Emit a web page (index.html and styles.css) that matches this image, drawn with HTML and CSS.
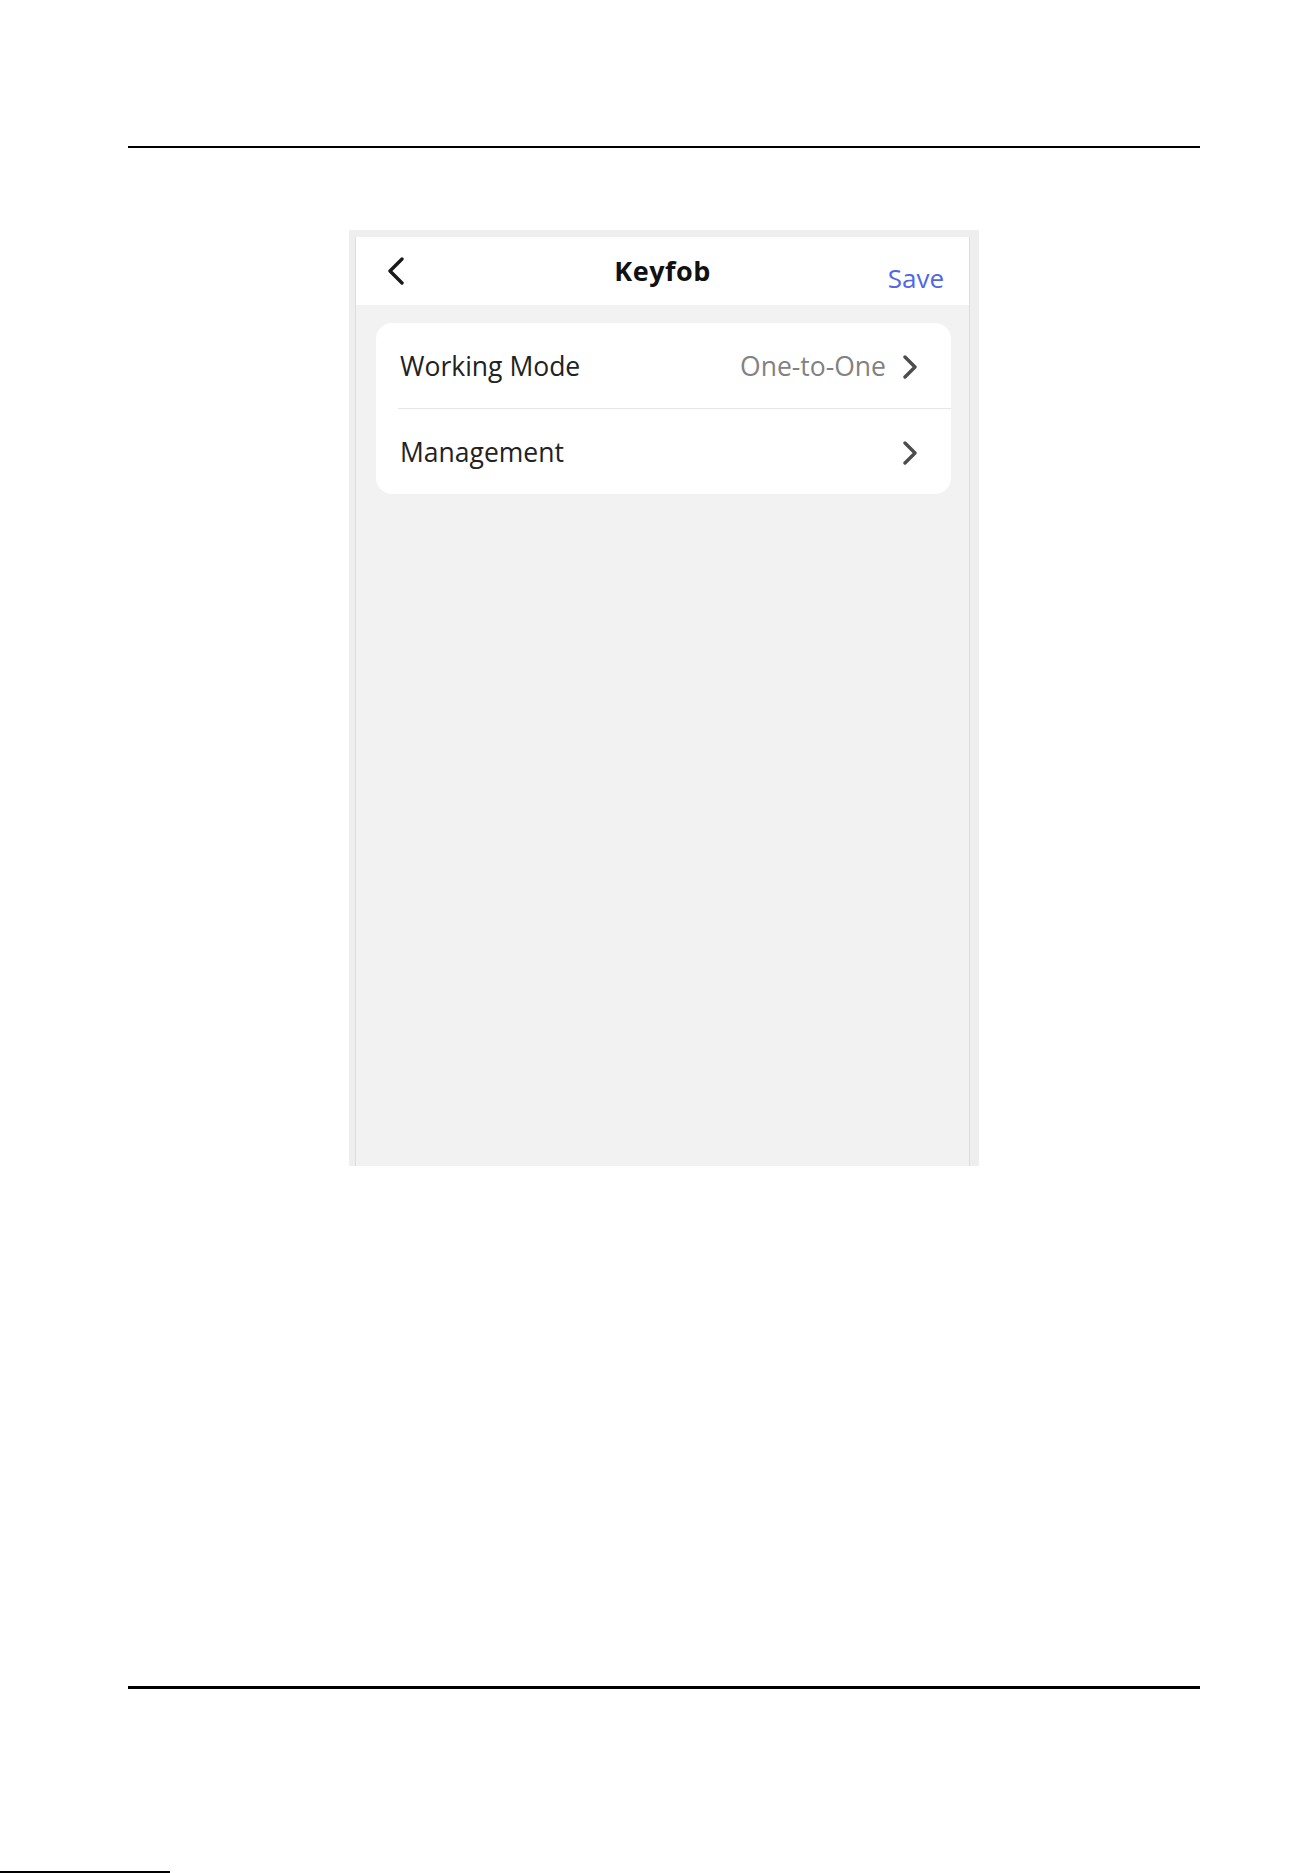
FILE: index.html
```html
<!DOCTYPE html>
<html lang="en">
<head>
<meta charset="utf-8">
<title>Keyfob</title>
<link rel="stylesheet" href="styles.css">
</head>
<body>
<div class="page">
  <div class="rule rule-top"></div>
  <div class="phone">
    <div class="screen">
      <header class="nav">
        <span class="back">
          <svg width="18" height="28" viewBox="0 0 18 28"><polyline points="15,2 3,14 15,26" fill="none" stroke="#1a1a1a" stroke-width="3.4" stroke-linecap="round" stroke-linejoin="round"/></svg>
        </span>
        <span class="title">Keyfob</span>
        <span class="save">Save</span>
      </header>
      <div class="content">
        <div class="card">
          <div class="row">
            <span class="label">Working Mode</span>
            <span class="value">One-to-One</span>
            <svg class="chev" width="16" height="24" viewBox="0 0 16 24"><polyline points="3,2 13,12 3,22" fill="none" stroke="#4d4d4d" stroke-width="3.4" stroke-linecap="round" stroke-linejoin="round"/></svg>
          </div>
          <div class="sep"></div>
          <div class="row">
            <span class="label">Management</span>
            <svg class="chev" width="16" height="24" viewBox="0 0 16 24"><polyline points="3,2 13,12 3,22" fill="none" stroke="#4d4d4d" stroke-width="3.4" stroke-linecap="round" stroke-linejoin="round"/></svg>
          </div>
        </div>
      </div>
    </div>
  </div>
  <div class="rule rule-bottom"></div>
  <div class="foot-line"></div>
</div>
</body>
</html>
```
FILE: styles.css
```css
html, body {
  margin: 0;
  padding: 0;
  background: #ffffff;
}
body {
  font-family: "Open Sans", "Noto Sans", sans-serif;
  height: 1873px;
  overflow: hidden;
}
.page {
  display: flex;
  flex-direction: column;
}
.rule {
  margin-left: 128px;
  width: 1072px;
  background: #000;
}
.rule-top {
  margin-top: 146px;
  height: 2px;
}
.phone {
  margin-top: 82px;
  margin-left: 349px;
  width: 630px;
  height: 936px;
  box-sizing: border-box;
  padding: 7px 9px 0 6px;
  background: #eeeeee;
}
.screen {
  height: 100%;
  box-sizing: border-box;
  border-left: 1px solid #dddddd;
  border-right: 1px solid #dddddd;
  background: #f2f2f2;
  display: flex;
  flex-direction: column;
}
.nav {
  height: 68px;
  background: #ffffff;
  display: grid;
  grid-template-columns: 1fr auto 1fr;
  align-items: start;
}
.back {
  justify-self: start;
  margin-left: 31px;
  margin-top: 20px;
  height: 28px;
  display: block;
}
.back svg { display: block; }
.title {
  font-weight: 700;
  font-size: 27px;
  line-height: 1;
  color: #111111;
  margin-top: 20px;
  letter-spacing: 0.5px;
}
.save {
  justify-self: end;
  margin-right: 25px;
  margin-top: 28px;
  font-size: 26px;
  line-height: 1;
  color: #5166e6;
}
.content {
  padding: 18px 18px 0 20px;
}
.card {
  background: #ffffff;
  border-radius: 16px;
  overflow: hidden;
}
.row {
  height: 85px;
  display: flex;
  align-items: center;
  padding: 2px 33px 0 24px;
  box-sizing: border-box;
  font-size: 26.5px;
  line-height: 1;
}
.label {
  color: #222222;
  flex: 1;
}
.value {
  color: #828282;
  margin-right: 16px;
}
.chev {
  display: block;
  flex: none;
}
.sep {
  height: 1px;
  margin-left: 22px;
  background: #e6e6e6;
}
.rule-bottom {
  margin-top: 520px;
  height: 3px;
}
.foot-line {
  margin-top: 182px;
  width: 170px;
  height: 2px;
  background: #000;
}
```
